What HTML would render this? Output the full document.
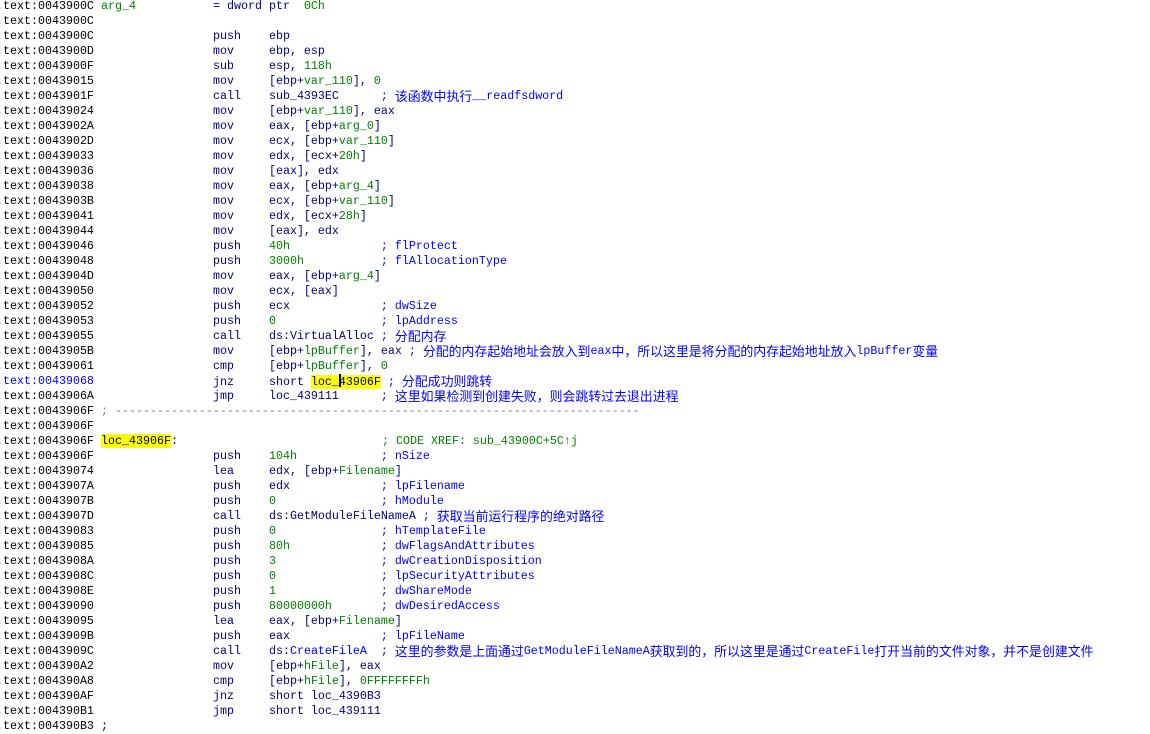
<!DOCTYPE html>
<html><head><meta charset="utf-8"><style>
body{margin:0;background:#fff;width:1150px;height:725px;overflow:hidden;position:relative;font-family:"Liberation Mono","Noto Sans CJK SC",monospace;font-size:11.67px;}
.l{position:absolute;left:0;height:15px;line-height:15px;white-space:pre;width:1150px}
.a{position:absolute;left:-4px;color:#000}
.m{position:absolute;left:213px;color:#000080;height:15px}
.lb{position:absolute;left:101px}
.g{color:#008000}.c{color:#0000ff}.n{color:#000080}
.h{background:#ffff00}
.k{color:#000;}
i{font-style:normal;font-size:12.9px;font-family:"Noto Sans CJK SC",sans-serif;display:inline-block;height:15px;line-height:15px;vertical-align:top;position:relative;top:-1px}
.cur{display:inline-block;width:2px;height:13px;background:#000;vertical-align:-2px;margin-right:-2px}
</style></head><body>
<div class="l" style="top:-1px"><span class="a">.text:0043900C</span><span class="lb g">arg_4</span><span class="m">= dword ptr  <span class="g">0Ch</span></span></div>
<div class="l" style="top:14px"><span class="a">.text:0043900C</span></div>
<div class="l" style="top:29px"><span class="a">.text:0043900C</span><span class="m">push    ebp</span></div>
<div class="l" style="top:44px"><span class="a">.text:0043900D</span><span class="m">mov     ebp, esp</span></div>
<div class="l" style="top:59px"><span class="a">.text:0043900F</span><span class="m">sub     esp, <span class="g">118h</span></span></div>
<div class="l" style="top:74px"><span class="a">.text:00439015</span><span class="m">mov     [ebp+<span class="g">var_110</span>], <span class="g">0</span></span></div>
<div class="l" style="top:89px"><span class="a">.text:0043901F</span><span class="m">call    sub_4393EC      <span class="c">; <i>该函数中执行</i>__readfsdword</span></span></div>
<div class="l" style="top:104px"><span class="a">.text:00439024</span><span class="m">mov     [ebp+<span class="g">var_110</span>], eax</span></div>
<div class="l" style="top:119px"><span class="a">.text:0043902A</span><span class="m">mov     eax, [ebp+<span class="g">arg_0</span>]</span></div>
<div class="l" style="top:134px"><span class="a">.text:0043902D</span><span class="m">mov     ecx, [ebp+<span class="g">var_110</span>]</span></div>
<div class="l" style="top:149px"><span class="a">.text:00439033</span><span class="m">mov     edx, [ecx+<span class="g">20h</span>]</span></div>
<div class="l" style="top:164px"><span class="a">.text:00439036</span><span class="m">mov     [eax], edx</span></div>
<div class="l" style="top:179px"><span class="a">.text:00439038</span><span class="m">mov     eax, [ebp+<span class="g">arg_4</span>]</span></div>
<div class="l" style="top:194px"><span class="a">.text:0043903B</span><span class="m">mov     ecx, [ebp+<span class="g">var_110</span>]</span></div>
<div class="l" style="top:209px"><span class="a">.text:00439041</span><span class="m">mov     edx, [ecx+<span class="g">28h</span>]</span></div>
<div class="l" style="top:224px"><span class="a">.text:00439044</span><span class="m">mov     [eax], edx</span></div>
<div class="l" style="top:239px"><span class="a">.text:00439046</span><span class="m">push    <span class="g">40h</span>             <span class="c">; flProtect</span></span></div>
<div class="l" style="top:254px"><span class="a">.text:00439048</span><span class="m">push    <span class="g">3000h</span>           <span class="c">; flAllocationType</span></span></div>
<div class="l" style="top:269px"><span class="a">.text:0043904D</span><span class="m">mov     eax, [ebp+<span class="g">arg_4</span>]</span></div>
<div class="l" style="top:284px"><span class="a">.text:00439050</span><span class="m">mov     ecx, [eax]</span></div>
<div class="l" style="top:299px"><span class="a">.text:00439052</span><span class="m">push    ecx             <span class="c">; dwSize</span></span></div>
<div class="l" style="top:314px"><span class="a">.text:00439053</span><span class="m">push    <span class="g">0</span>               <span class="c">; lpAddress</span></span></div>
<div class="l" style="top:329px"><span class="a">.text:00439055</span><span class="m">call    ds:VirtualAlloc <span class="c">; <i>分配内存</i></span></span></div>
<div class="l" style="top:344px"><span class="a">.text:0043905B</span><span class="m">mov     [ebp+<span class="g">lpBuffer</span>], eax <span class="c">; <i>分配的内存起始地址会放入到</i>eax<i>中，所以这里是将分配的内存起始地址放入</i>lpBuffer<i>变量</i></span></span></div>
<div class="l" style="top:359px"><span class="a">.text:00439061</span><span class="m">cmp     [ebp+<span class="g">lpBuffer</span>], <span class="g">0</span></span></div>
<div class="l" style="top:374px"><span class="a" style="color:#0000ff">.text:00439068</span><span class="m">jnz     short <span class="h">loc_<span class="cur"></span>43906F</span> <span class="c">; <i>分配成功则跳转</i></span></span></div>
<div class="l" style="top:389px"><span class="a">.text:0043906A</span><span class="m">jmp     loc_439111      <span class="c">; <i>这里如果检测到创建失败，则会跳转过去退出进程</i></span></span></div>
<div class="l" style="top:404px"><span class="a">.text:0043906F</span><span class="lb" style="color:#808080">; ---------------------------------------------------------------------------</span></div>
<div class="l" style="top:419px"><span class="a">.text:0043906F</span></div>
<div class="l" style="top:434px"><span class="a">.text:0043906F</span><span class="lb k"><span class="h">loc_43906F</span>:</span><span class="m" style="left:382px"><span class="g">; CODE XREF: sub_43900C+5C↑j</span></span></div>
<div class="l" style="top:449px"><span class="a">.text:0043906F</span><span class="m">push    <span class="g">104h</span>            <span class="c">; nSize</span></span></div>
<div class="l" style="top:464px"><span class="a">.text:00439074</span><span class="m">lea     edx, [ebp+<span class="g">Filename</span>]</span></div>
<div class="l" style="top:479px"><span class="a">.text:0043907A</span><span class="m">push    edx             <span class="c">; lpFilename</span></span></div>
<div class="l" style="top:494px"><span class="a">.text:0043907B</span><span class="m">push    <span class="g">0</span>               <span class="c">; hModule</span></span></div>
<div class="l" style="top:509px"><span class="a">.text:0043907D</span><span class="m">call    ds:GetModuleFileNameA <span class="c">; <i>获取当前运行程序的绝对路径</i></span></span></div>
<div class="l" style="top:524px"><span class="a">.text:00439083</span><span class="m">push    <span class="g">0</span>               <span class="c">; hTemplateFile</span></span></div>
<div class="l" style="top:539px"><span class="a">.text:00439085</span><span class="m">push    <span class="g">80h</span>             <span class="c">; dwFlagsAndAttributes</span></span></div>
<div class="l" style="top:554px"><span class="a">.text:0043908A</span><span class="m">push    <span class="g">3</span>               <span class="c">; dwCreationDisposition</span></span></div>
<div class="l" style="top:569px"><span class="a">.text:0043908C</span><span class="m">push    <span class="g">0</span>               <span class="c">; lpSecurityAttributes</span></span></div>
<div class="l" style="top:584px"><span class="a">.text:0043908E</span><span class="m">push    <span class="g">1</span>               <span class="c">; dwShareMode</span></span></div>
<div class="l" style="top:599px"><span class="a">.text:00439090</span><span class="m">push    <span class="g">80000000h</span>       <span class="c">; dwDesiredAccess</span></span></div>
<div class="l" style="top:614px"><span class="a">.text:00439095</span><span class="m">lea     eax, [ebp+<span class="g">Filename</span>]</span></div>
<div class="l" style="top:629px"><span class="a">.text:0043909B</span><span class="m">push    eax             <span class="c">; lpFileName</span></span></div>
<div class="l" style="top:644px"><span class="a">.text:0043909C</span><span class="m">call    ds:<span class="c">CreateFileA</span>  <span class="c">; <i>这里的参数是上面通过</i>GetModuleFileNameA<i>获取到的，所以这里是通过</i>CreateFile<i>打开当前的文件对象，并不是创建文件</i></span></span></div>
<div class="l" style="top:659px"><span class="a">.text:004390A2</span><span class="m">mov     [ebp+<span class="g">hFile</span>], eax</span></div>
<div class="l" style="top:674px"><span class="a">.text:004390A8</span><span class="m">cmp     [ebp+<span class="g">hFile</span>], <span class="g">0FFFFFFFFh</span></span></div>
<div class="l" style="top:689px"><span class="a">.text:004390AF</span><span class="m">jnz     short loc_4390B3</span></div>
<div class="l" style="top:704px"><span class="a">.text:004390B1</span><span class="m">jmp     short loc_439111</span></div>
<div class="l" style="top:719px"><span class="a">.text:004390B3</span><span class="m" style="left:101px;color:#000">;</span></div>
</body></html>
